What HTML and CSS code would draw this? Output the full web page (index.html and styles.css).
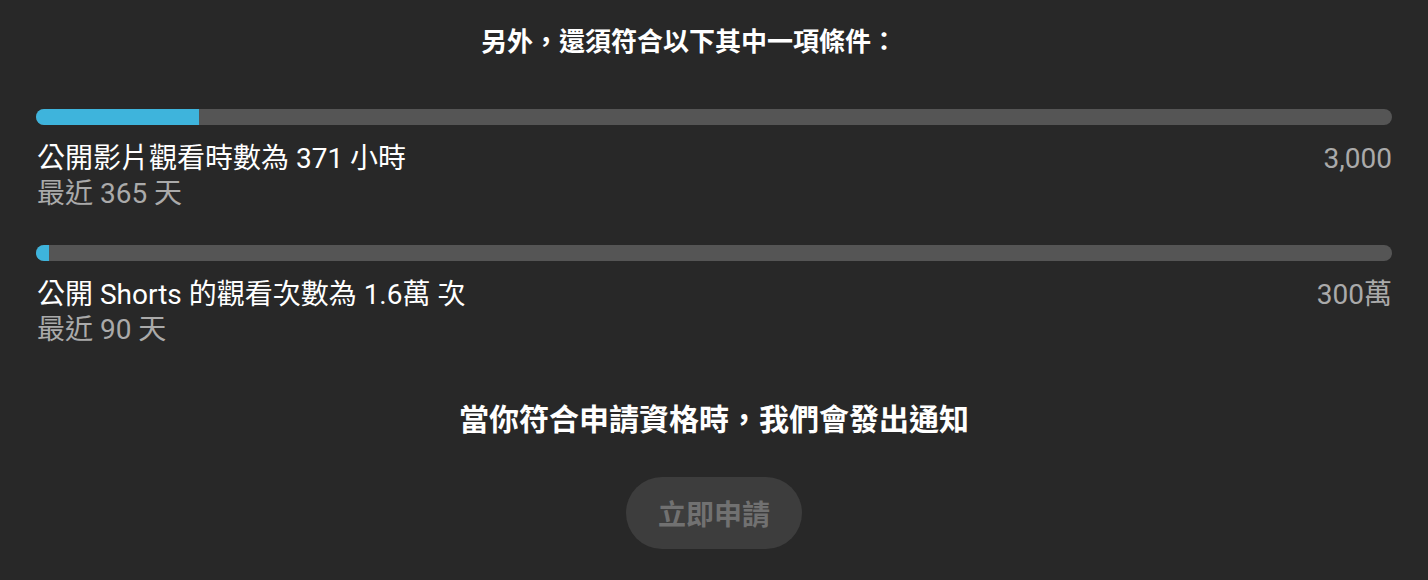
FILE: index.html
```html
<!DOCTYPE html>
<html lang="zh-Hant">
<head>
<meta charset="utf-8">
<link rel="stylesheet" href="styles.css">
</head>
<body>
<div class="page">
  <div class="title">另外，還須符合以下其中一項條件：</div>

  <div class="metric first">
    <div class="bar"><div class="fill" style="width: 12.02%"></div></div>
    <div class="row">
      <div class="label">公開影片觀看時數為 371 小時</div>
      <div class="target">3,000</div>
    </div>
    <div class="sub">最近 365 天</div>
  </div>

  <div class="metric">
    <div class="bar"><div class="fill" style="width: 0.97%"></div></div>
    <div class="row">
      <div class="label">公開 Shorts 的觀看次數為 1.6萬 次</div>
      <div class="target">300萬</div>
    </div>
    <div class="sub">最近 90 天</div>
  </div>

  <div class="notice">當你符合申請資格時，我們會發出通知</div>
  <div class="actions">
    <button class="apply" disabled>立即申請</button>
  </div>
</div>
</body>
</html>
```
FILE: styles.css
```css
html, body {
  margin: 0;
  padding: 0;
  background: #282828;
}
body {
  font-family: "Roboto", "Noto Sans CJK TC", sans-serif;
  color: #ffffff;
}
.page {
  width: 1428px;
  height: 580px;
  box-sizing: border-box;
  padding: 24px 36px 0;
  display: flex;
  flex-direction: column;
}
.title {
  text-align: center;
  font-size: 26px;
  font-weight: 700;
  line-height: 36px;
  height: 36px;
  padding-right: 50px;
}
.metric {
  margin-top: 34px;
}
.metric.first {
  margin-top: 49px;
}
.bar {
  height: 16px;
  border-radius: 8px;
  background: #555555;
  overflow: hidden;
}
.fill {
  height: 100%;
  background: #3eb4dc;
}
.row {
  margin-top: 16px;
  display: flex;
  justify-content: space-between;
  font-size: 28px;
  line-height: 35px;
}
.label {
  color: #ffffff;
  padding-left: 1px;
}
.target {
  color: #aaaaaa;
}
.sub {
  font-size: 28px;
  line-height: 35px;
  color: #aaaaaa;
  padding-left: 1px;
}
.notice {
  margin-top: 53px;
  text-align: center;
  font-size: 30px;
  font-weight: 700;
  line-height: 40px;
}
.actions {
  margin-top: 37px;
  display: flex;
  justify-content: center;
}
.apply {
  width: 176px;
  height: 72px;
  border: none;
  border-radius: 36px;
  background: #3d3d3d;
  color: #717171;
  font-family: "Roboto", "Noto Sans CJK TC", sans-serif;
  font-size: 28px;
  font-weight: 700;
  padding: 0;
}
```
